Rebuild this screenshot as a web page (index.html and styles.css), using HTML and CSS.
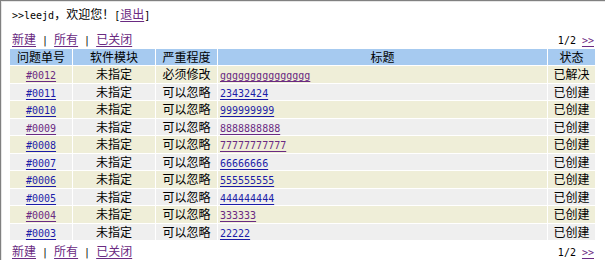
FILE: index.html
```html
<!DOCTYPE html>
<html>
<head>
<meta charset="utf-8">
<link rel="stylesheet" href="styles.css">
</head>
<body>
<div class="welcome"><span class="en">&gt;&gt;leejd</span>，欢迎您！<span class="en">[</span><a class="nav" href="#">退出</a><span class="en">]</span></div>
<div class="bar">
  <div class="nav-links"><a class="nav" href="#">新建</a><span class="en"> | </span><a class="nav" href="#">所有</a><span class="en"> | </span><a class="nav" href="#">已关闭</a></div>
  <div class="pager"><span class="en">1/2 </span><a class="en v" href="#">&gt;&gt;</a></div>
</div>
<table class="grid">
  <colgroup><col class="c1"><col class="c2"><col class="c3"><col class="c4"><col class="c5"></colgroup>
  <thead>
    <tr><th>问题单号</th><th>软件模块</th><th>严重程度</th><th>标题</th><th>状态</th></tr>
  </thead>
  <tbody>
    <tr class="odd"><td><a class="en v" href="#">#0012</a></td><td>未指定</td><td>必须修改</td><td class="t"><a class="en v" href="#">ggggggggggggggg</a></td><td>已解决</td></tr>
    <tr class="even"><td><a class="en" href="#">#0011</a></td><td>未指定</td><td>可以忽略</td><td class="t"><a class="en" href="#">23432424</a></td><td>已创建</td></tr>
    <tr class="odd"><td><a class="en" href="#">#0010</a></td><td>未指定</td><td>可以忽略</td><td class="t"><a class="en" href="#">999999999</a></td><td>已创建</td></tr>
    <tr class="even"><td><a class="en v" href="#">#0009</a></td><td>未指定</td><td>可以忽略</td><td class="t"><a class="en v" href="#">8888888888</a></td><td>已创建</td></tr>
    <tr class="odd"><td><a class="en" href="#">#0008</a></td><td>未指定</td><td>可以忽略</td><td class="t"><a class="en v" href="#">77777777777</a></td><td>已创建</td></tr>
    <tr class="even"><td><a class="en" href="#">#0007</a></td><td>未指定</td><td>可以忽略</td><td class="t"><a class="en" href="#">66666666</a></td><td>已创建</td></tr>
    <tr class="odd"><td><a class="en" href="#">#0006</a></td><td>未指定</td><td>可以忽略</td><td class="t"><a class="en" href="#">555555555</a></td><td>已创建</td></tr>
    <tr class="even"><td><a class="en" href="#">#0005</a></td><td>未指定</td><td>可以忽略</td><td class="t"><a class="en" href="#">444444444</a></td><td>已创建</td></tr>
    <tr class="odd"><td><a class="en v" href="#">#0004</a></td><td>未指定</td><td>可以忽略</td><td class="t"><a class="en v" href="#">333333</a></td><td>已创建</td></tr>
    <tr class="even"><td><a class="en" href="#">#0003</a></td><td>未指定</td><td>可以忽略</td><td class="t"><a class="en" href="#">22222</a></td><td>已创建</td></tr>
  </tbody>
</table>
<div class="bar bottom">
  <div class="nav-links"><a class="nav" href="#">新建</a><span class="en"> | </span><a class="nav" href="#">所有</a><span class="en"> | </span><a class="nav" href="#">已关闭</a></div>
  <div class="pager"><span class="en">1/2 </span><a class="en v" href="#">&gt;&gt;</a></div>
</div>
</body>
</html>
```
FILE: styles.css
```css
html {
  border-top: 1px solid #808080;
  border-left: 1px solid #808080;
  background: #fff;
}
body {
  margin: 0;
  border-top: 1px solid #e6e6e6;
  border-left: 1px solid #e6e6e6;
  padding: 4px 8px 0 8px;
  font-family: "Noto Sans CJK SC", sans-serif;
  font-size: 12px;
  line-height: 16px;
  color: #000;
}
.en {
  font-family: "DejaVu Sans Mono", monospace;
  font-size: 10px;
  line-height: 10px;
  white-space: pre;
}
a {
  color: #1c1ca8;
  text-underline-offset: 2px;
}
a.v, a.nav {
  color: #6a2a82;
}
.welcome {
  padding-left: 2px;
  height: 17px;
}
.bar {
  display: flex;
  justify-content: space-between;
  align-items: center;
  margin-top: 7px;
  height: 18px;
  padding: 0 3px 0 2px;
}
.bar.bottom {
  margin-top: 1px;
}
.grid {
  width: 100%;
  border-collapse: separate;
  border-spacing: 1px;
  margin-left: -1px;
  table-layout: fixed;
}
.c1 { width: 62px; }
.c2 { width: 82px; }
.c3 { width: 61px; }
.c5 { width: 47px; }
.grid th {
  background: #a6caf0;
  font-weight: normal;
  height: 16px;
  padding: 0;
  line-height: 16px;
  text-align: center;
}
.grid td {
  height: 16.5px;
  padding: 0;
  line-height: 16px;
  text-align: center;
  white-space: nowrap;
  overflow: hidden;
}
.grid td.t {
  text-align: left;
  padding-left: 2px;
}
.odd td { background: #efeed8; }
.even td { background: #efefef; }
```
